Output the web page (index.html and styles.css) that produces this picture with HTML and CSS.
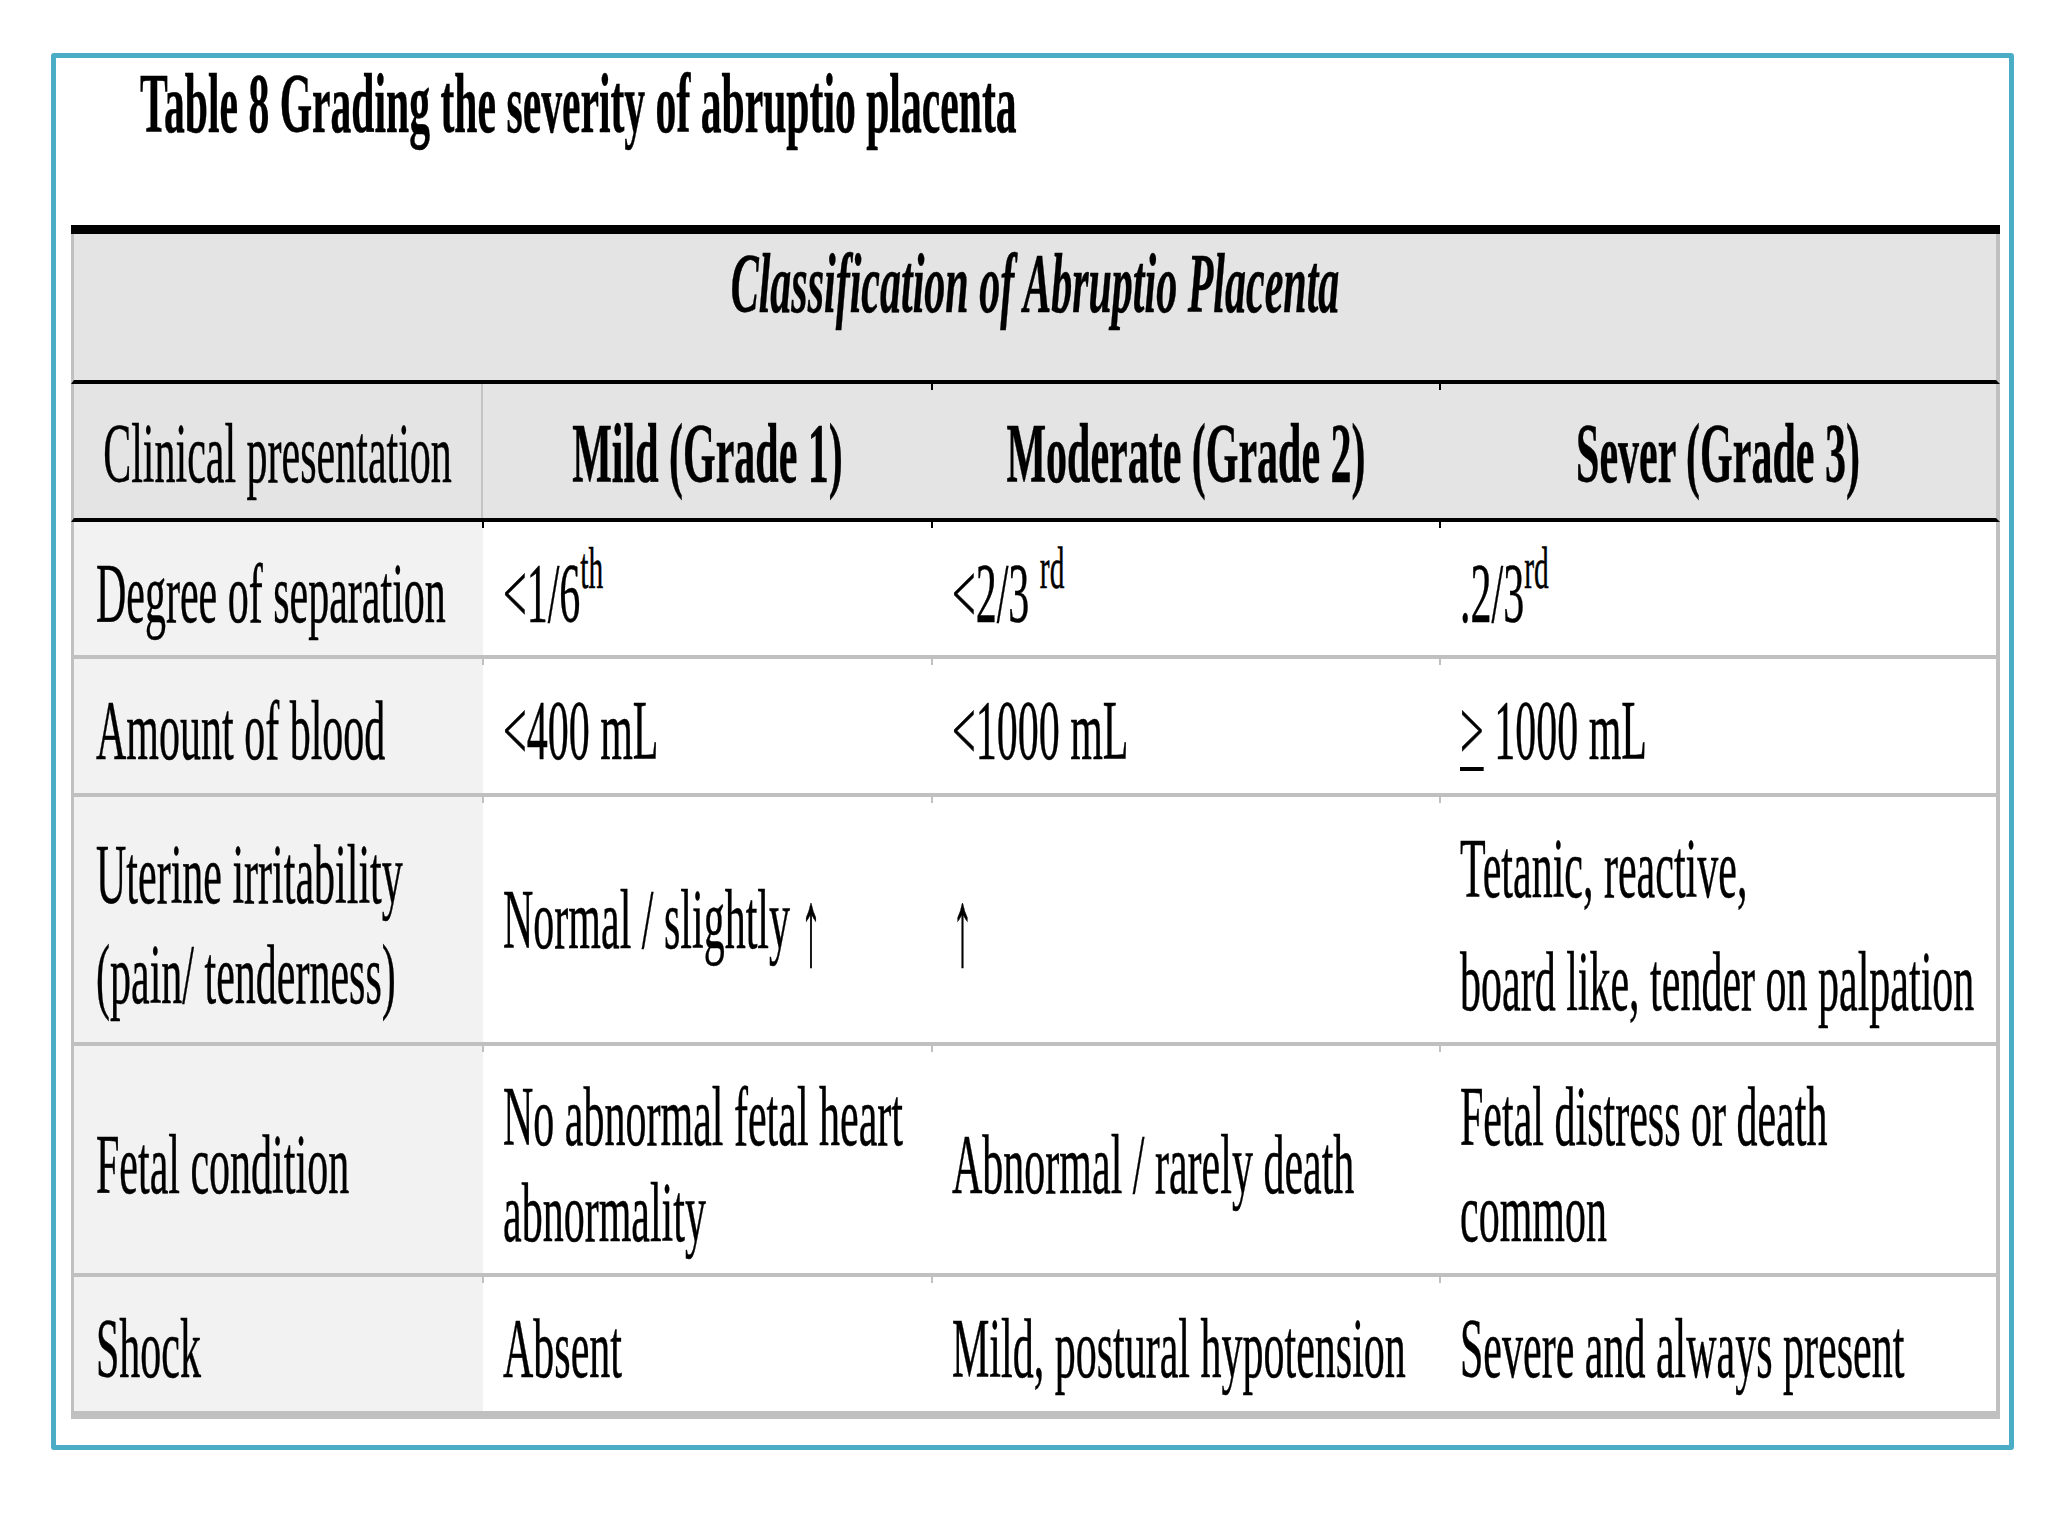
FILE: index.html
```html
<!DOCTYPE html>
<html>
<head>
<meta charset="utf-8">
<link rel="stylesheet" href="styles.css">
</head>
<body>
<div class="frame">
  <div class="title"><div class="tx tx-title">Table 8 Grading the severity of abruptio placenta</div></div>
  <div class="table">
    <div class="caption"><div class="tx tx-cap">Classification of Abruptio Placenta</div></div>
    <div class="row head">
      <div class="cell c1 center"><div class="tx">Clinical presentation</div></div>
      <div class="cell center"><div class="tx bold">Mild (Grade 1)</div></div>
      <div class="cell center tk tk-dark"><div class="tx bold">Moderate (Grade 2)</div></div>
      <div class="cell center tk tk-dark"><div class="tx bold">Sever (Grade 3)</div></div>
    </div>
    <div class="row r1">
      <div class="cell c1"><div class="tx">Degree of separation</div></div>
      <div class="cell tk tk-dark"><div class="tx">&lt;1/6<sup>th</sup></div></div>
      <div class="cell tk tk-dark"><div class="tx">&lt;2/3 <sup>rd</sup></div></div>
      <div class="cell tk tk-dark"><div class="tx">.2/3<sup>rd</sup></div></div>
    </div>
    <div class="row r2">
      <div class="cell c1"><div class="tx">Amount of blood</div></div>
      <div class="cell tk"><div class="tx">&lt;400 mL</div></div>
      <div class="cell tk"><div class="tx">&lt;1000 mL</div></div>
      <div class="cell tk"><div class="tx"><span class="ge">&gt;</span> 1000 mL</div></div>
    </div>
    <div class="row r3">
      <div class="cell c1"><div class="tx lh100">Uterine irritability<br>(pain/ tenderness)</div></div>
      <div class="cell tk"><div class="tx">Normal / slightly <span class="arrow">↑</span></div></div>
      <div class="cell tk"><div class="tx"><span class="arrow">↑</span></div></div>
      <div class="cell tk"><div class="tx lh113">Tetanic, reactive,<br>board like, tender on palpation</div></div>
    </div>
    <div class="row r4">
      <div class="cell c1"><div class="tx">Fetal condition</div></div>
      <div class="cell tk"><div class="tx lh96">No abnormal fetal heart<br>abnormality</div></div>
      <div class="cell tk"><div class="tx">Abnormal / rarely death</div></div>
      <div class="cell tk"><div class="tx lh96">Fetal distress or death<br>common</div></div>
    </div>
    <div class="row r5">
      <div class="cell c1"><div class="tx">Shock</div></div>
      <div class="cell tk"><div class="tx">Absent</div></div>
      <div class="cell tk"><div class="tx">Mild, postural hypotension</div></div>
      <div class="cell tk"><div class="tx">Severe and always present</div></div>
    </div>
  </div>
</div>
</body>
</html>
```
FILE: styles.css
```css
html, body {
  margin: 0;
  padding: 0;
  background: #ffffff;
  overflow: hidden;
}

body {
  font-family: "Liberation Serif", "Times New Roman", serif;
  color: #000000;
}

.frame {
  margin: 53px 0 0 51px;
  width: 1963px;
  box-sizing: border-box;
  border: 5px solid #4bacc6;
  border-radius: 3px;
  padding: 0 9px 26px 15px;
  background: #ffffff;
}

.title {
  height: 167px;
  padding-left: 69px;
  box-sizing: border-box;
}

.tx {
  width: 200%;
  transform: scaleX(0.5);
  transform-origin: 0 50%;
  white-space: nowrap;
  font-family: "Liberation Serif", "Times New Roman", serif;
  font-size: 84px;
  line-height: 100px;
  flex-shrink: 0;
  -webkit-text-stroke: 0.5px #000000;
}

.tx-title {
  font-size: 85px;
  line-height: 90px;
  font-weight: bold;
  transform: scaleX(0.49);
}

.tx-cap {
  font-weight: bold;
  font-style: italic;
  text-align: center;
}

.bold {
  font-weight: bold;
}

.table {
  width: 1929px;
  border-top: 9px solid #000000;
}

.caption {
  height: 150px;
  box-sizing: border-box;
  background: #e4e4e4;
  border-left: 3px solid #c0c0c0;
  border-right: 4px solid #c0c0c0;
  border-bottom: 4px solid #000000;
  display: flex;
  flex-direction: column;
  justify-content: center;
  padding-bottom: 46px;
}

.row {
  display: grid;
  grid-template-columns: 409px 449px 508px 556px;
  box-sizing: border-box;
  border-left: 3px solid #c0c0c0;
  border-right: 4px solid #c0c0c0;
  border-bottom: 4px solid #c0c0c0;
}

.head {
  height: 138px;
  background: #e4e4e4;
  border-bottom-color: #000000;
}

.r1 { height: 137px; }
.r2 { height: 138px; }
.r3 { height: 249px; }
.r4 { height: 231px; }
.r5 { height: 142px; border-bottom-width: 8px; }

.cell {
  position: relative;
  display: flex;
  flex-direction: column;
  justify-content: center;
  padding: 10px 20px 0 20px;
  box-sizing: border-box;
  min-width: 0;
}

.row .c1 {
  background: #f2f2f2;
  padding-left: 22px;
}

.head .c1 {
  background: #e4e4e4;
  border-right: 2px solid #c4c4c4;
}

.cell.center {
  padding: 6px 0 0 0;
}

.cell.center .tx {
  text-align: center;
}

.tk::before {
  content: "";
  position: absolute;
  left: -1px;
  top: 0;
  width: 2px;
  height: 6px;
  background: #c0c0c0;
}

.tk-dark::before {
  background: #000000;
}

.lh100 { line-height: 100px; }
.lh113 { line-height: 113px; }
.lh96 { line-height: 96px; }

sup {
  font-size: 0.7em;
  line-height: 0;
  vertical-align: 34px;
}

.ge {
  text-decoration: underline;
  text-decoration-thickness: 4px;
  text-underline-offset: 8px;
}

.arrow {
  display: inline-block;
  line-height: 84px;
  vertical-align: -17px;
  transform-origin: 50% 70px;
  transform: scaleY(1.3);
}
```
